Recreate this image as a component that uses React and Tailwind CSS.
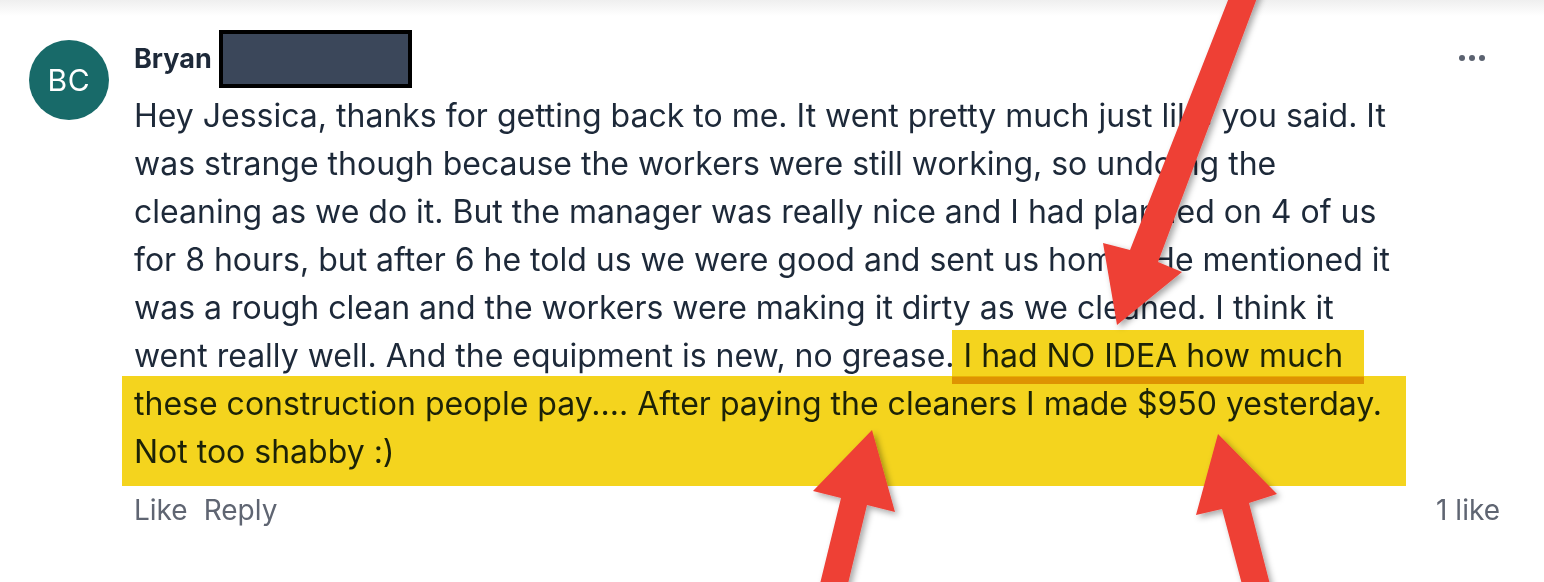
import React from 'react';

const lines = [
  'Hey Jessica, thanks for getting back to me. It went pretty much just like you said. It',
  'was strange though because the workers were still working, so undoing the',
  'cleaning as we do it. But the manager was really nice and I had planned on 4 of us',
  'for 8 hours, but after 6 he told us we were good and sent us home. He mentioned it',
  'was a rough clean and the workers were making it dirty as we cleaned. I think it',
  'went really well. And the equipment is new, no grease. I had NO IDEA how much',
  'these construction people pay.... After paying the cleaners I made $950 yesterday.',
  'Not too shabby :)',
];

// Red annotation arrows drawn over the comment
const Arrows = () => (
  <svg className="absolute inset-0 pointer-events-none" width="1544" height="582" viewBox="0 0 1544 582">
    <defs>
      <filter id="shadow" x="-20%" y="-20%" width="140%" height="140%">
        <feDropShadow dx="3" dy="3" stdDeviation="3" floodColor="#000" floodOpacity="0.35" />
      </filter>
    </defs>
    <g fill="#ee3f36" filter="url(#shadow)">
      <polygon points="1232,-10 1260,-10 1158,262 1182,272 1117,325 1103,243 1130,250" />
      <polygon points="872,430 895,512 867,505 846,592 818,592 841,498 813,491" />
      <polygon points="1218,434 1277,494 1249,503 1272,592 1244,592 1222,509 1196,515" />
    </g>
  </svg>
);

export default function App() {
  return (
    <div className="relative w-[1544px] h-[582px] overflow-hidden bg-white" style={{ fontFamily: 'Inter, "Noto Sans", sans-serif' }}>
      <div className="h-4 bg-gradient-to-b from-[#efefef] to-white" />

      <div className="flex pl-[29px] pr-[44px] -mt-[6px]">
        {/* Avatar */}
        <div className="mt-[30px] w-20 h-20 shrink-0 rounded-full bg-[#186a69] flex items-center justify-center text-white text-[30px] tracking-wide">
          BC
        </div>

        <div className="ml-[25px] mt-[20px] flex-1">
          <div className="flex items-center justify-between h-[58px]">
            <div className="flex items-center">
              <span className="text-[27px] font-bold text-[#1d2939]">Bryan</span>
              <div className="ml-[7px] w-[193px] h-[58px] border-4 border-black bg-[#3b475a]" />
            </div>
            <div className="flex items-center gap-[4px] pr-[15px] -mt-[2px]">
              <span className="w-[6px] h-[6px] rounded-full bg-[#5b6270]" />
              <span className="w-[6px] h-[6px] rounded-full bg-[#5b6270]" />
              <span className="w-[6px] h-[6px] rounded-full bg-[#5b6270]" />
            </div>
          </div>

          <div className="mt-[4px] text-[32px] leading-[48px] text-[#1d2939]">
            {lines.map((l, i) => (
              <div key={i} className="whitespace-nowrap">{l}</div>
            ))}
          </div>

          <div className="mt-[14px] flex items-center justify-between h-10 text-[28px] text-[#5f6572]">
            <div className="flex gap-[16px]">
              <span>Like</span>
              <span>Reply</span>
            </div>
            <span>1 like</span>
          </div>
        </div>
      </div>

      {/* Highlights */}
      <div className="absolute left-[122px] top-[376px] w-[1284px] h-[110px] bg-[#f4d41e] mix-blend-multiply" />
      <div className="absolute left-[952px] top-[330px] w-[412px] h-[54px] bg-[#f4d41e] border-b-[7px] border-[#e8b10a] mix-blend-multiply" />

      <Arrows />
    </div>
  );
}
